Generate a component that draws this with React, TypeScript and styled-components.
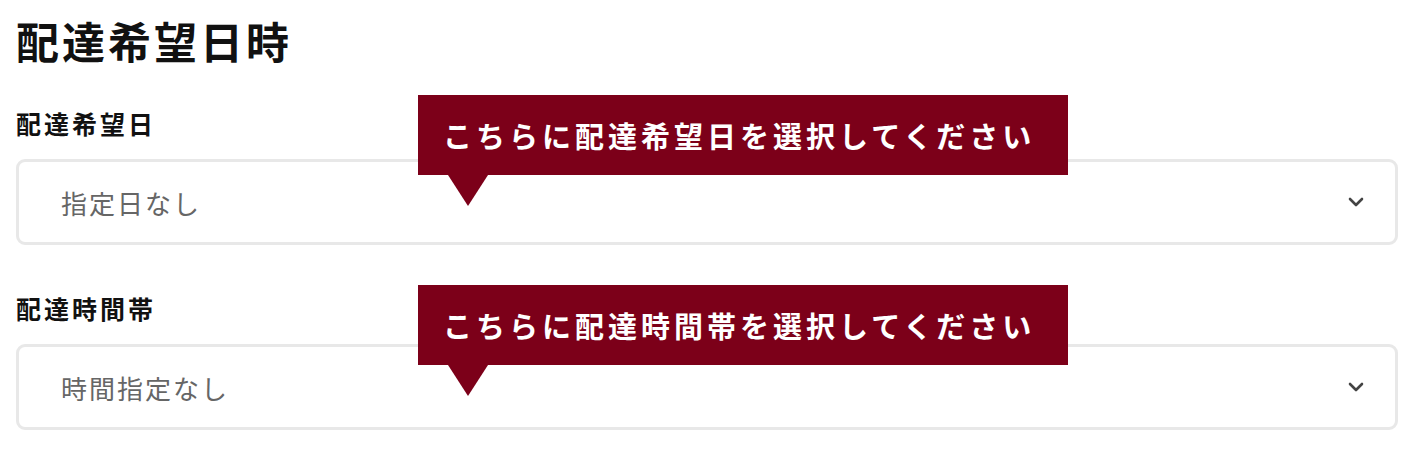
import React from "react";
import styled, { createGlobalStyle } from "styled-components";

const GlobalStyle = createGlobalStyle`
  html, body {
    margin: 0;
    padding: 0;
    background: #ffffff;
  }
  body {
    font-family: "Noto Sans CJK JP", "Noto Sans", sans-serif;
    color: #111;
  }
`;

const Page = styled.main`
  display: flex;
  flex-direction: column;
  padding: 10px 21px 20px 16px;
`;

const Heading = styled.h1`
  margin: 0 0 35px 0;
  font-size: 43px;
  line-height: 60px;
  font-weight: 700;
  letter-spacing: 3px;
  color: #111;
`;

const Fields = styled.div`
  display: flex;
  flex-direction: column;
  gap: 45px;
`;

const Field = styled.div`
  position: relative;
  display: flex;
  flex-direction: column;
  gap: 18px;
`;

const Label = styled.label`
  font-size: 25px;
  line-height: 36px;
  font-weight: 700;
  letter-spacing: 3px;
  color: #111;
`;

const SelectBox = styled.div`
  height: 80px;
  border: 3px solid #e8e8e8;
  border-radius: 9px;
  background: #fff;
  display: flex;
  align-items: center;
  justify-content: space-between;
  padding: 0 30px 0 42px;
`;

const SelectValue = styled.span`
  font-size: 26px;
  letter-spacing: 2px;
  color: #666;
`;

const Chevron = styled.svg`
  width: 18px;
  height: 12px;
  flex: none;
`;

const Tooltip = styled.div<{ $top: number }>`
  position: absolute;
  left: 402px;
  top: ${(p) => p.$top}px;
  height: 80px;
  padding: 0 33px 0 25px;
  display: flex;
  align-items: center;
  background: #7c0019;
  color: #fff;
  font-size: 29px;
  font-weight: 700;
  letter-spacing: 4px;
  white-space: nowrap;

  &::after {
    content: "";
    position: absolute;
    left: 30px;
    top: 100%;
    border-left: 20px solid transparent;
    border-right: 20px solid transparent;
    border-top: 31px solid #7c0019;
  }
`;

type FieldData = {
  label: string;
  value: string;
  hint: string;
  tipTop: number;
};

const fields: FieldData[] = [
  { label: "配達希望日", value: "指定日なし", hint: "こちらに配達希望日を選択してください", tipTop: -10 },
  { label: "配達時間帯", value: "時間指定なし", hint: "こちらに配達時間帯を選択してください", tipTop: -5 },
];

export default function App() {
  return (
    <>
      <GlobalStyle />
      <Page>
        <Heading>配達希望日時</Heading>
        <Fields>
          {fields.map((f) => (
            <Field key={f.label}>
              <Label>{f.label}</Label>
              <SelectBox>
                <SelectValue>{f.value}</SelectValue>
                <Chevron viewBox="0 0 18 12">
                  <polyline
                    points="3,3 9,9 15,3"
                    fill="none"
                    stroke="#444"
                    strokeWidth="2.6"
                    strokeLinecap="round"
                    strokeLinejoin="round"
                  />
                </Chevron>
              </SelectBox>
              <Tooltip $top={f.tipTop}>{f.hint}</Tooltip>
            </Field>
          ))}
        </Fields>
      </Page>
    </>
  );
}
